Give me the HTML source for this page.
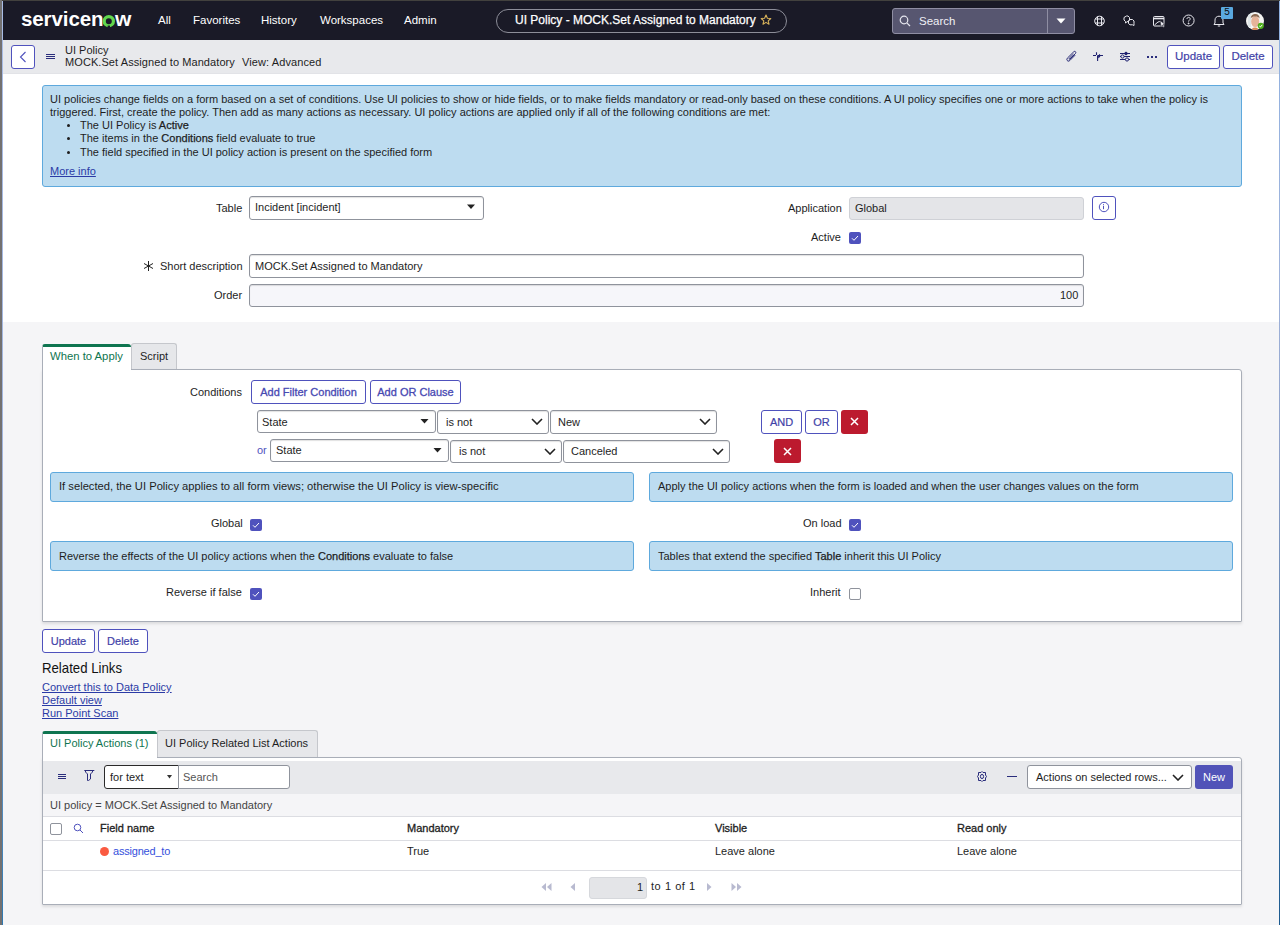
<!DOCTYPE html>
<html><head><meta charset="utf-8">
<style>
*{box-sizing:border-box;margin:0;padding:0}
html,body{width:1280px;height:925px;overflow:hidden;-webkit-font-smoothing:antialiased}
body{position:relative;background:#f5f5f7;font-family:"Liberation Sans",sans-serif;font-size:11px;color:#1e1e1e}
.a{position:absolute}
.t{position:absolute;white-space:nowrap;line-height:13px}
.hdr{left:0;top:0;width:1280px;height:40px;background:#1a1a27}
.sub{left:0;top:40px;width:1280px;height:34px;background:#e8e9ec;border-bottom:1px solid #e2e3e7}
.form{left:0;top:74px;width:1280px;height:248px;background:#fff}
.btn{position:absolute;border:1px solid #4f52bd;border-radius:3px;background:#fff;color:#3f42a8;font-size:11px;text-align:center;-webkit-text-stroke:0.2px #3f42a8}
.inp{position:absolute;border:1px solid #8f939c;border-radius:3px;background:#fff;box-shadow:inset 0 1px 1px rgba(0,0,0,.12)}
.info{position:absolute;background:#bddcf0;border:1px solid #5ea9dd;border-radius:3px}
.cb{position:absolute;width:12px;height:12px;background:#4f52bd;border-radius:2px}
.cb svg{position:absolute;left:0;top:0}
.sb{-webkit-text-stroke:0.25px #1e1e1e}
.lnk{color:#2b3ba6;text-decoration:underline}
</style></head><body>
<!-- header -->
<div class="a hdr"></div>
<div class="a sub"></div>
<div class="a form"></div>


<!-- logo -->
<div class="t" style="left:21px;top:7px;font-size:20.5px;line-height:24px;font-weight:bold;color:#fff;letter-spacing:-0.1px">servicen</div>
<svg class="a" style="left:102px;top:14.5px" width="14" height="13" viewBox="0 0 14 13"><circle cx="6.8" cy="6.2" r="4.6" fill="none" stroke="#62d84e" stroke-width="3.2"/><rect x="5.6" y="10.6" width="2.4" height="2.4" fill="#1a1a27"/></svg>
<div class="t" style="left:115px;top:7px;font-size:21px;line-height:24px;font-weight:bold;color:#fff">w</div>
<div class="t" style="left:158px;top:14px;font-size:11.5px;color:#fff">All</div>
<div class="t" style="left:193px;top:14px;font-size:11.5px;color:#fff">Favorites</div>
<div class="t" style="left:261px;top:14px;font-size:11.5px;color:#fff">History</div>
<div class="t" style="left:320px;top:14px;font-size:11.5px;color:#fff">Workspaces</div>
<div class="t" style="left:404px;top:14px;font-size:11.5px;color:#fff">Admin</div>
<!-- pill -->
<div class="a" style="left:496px;top:9px;width:291px;height:24px;border:1px solid #8d8e99;border-radius:12px"></div>
<div class="t" style="left:515px;top:14px;font-size:12px;color:#fff;font-weight:normal;-webkit-text-stroke:0.25px #fff">UI Policy - MOCK.Set Assigned to Mandatory</div>
<svg class="a" style="left:760px;top:14px" width="12" height="12" viewBox="0 0 12 12"><path d="M6 1 L7.4 4.2 L10.8 4.5 L8.2 6.8 L9 10.2 L6 8.4 L3 10.2 L3.8 6.8 L1.2 4.5 L4.6 4.2 Z" fill="none" stroke="#d8b25a" stroke-width="1.1" stroke-linejoin="round"/></svg>
<!-- search -->
<div class="a" style="left:892px;top:8px;width:183px;height:26px;background:#575670;border:1px solid #8f8ea3;border-radius:3px"></div>
<div class="a" style="left:1047px;top:9px;width:1px;height:24px;background:#8f8ea3"></div>
<svg class="a" style="left:899px;top:15px" width="12" height="12" viewBox="0 0 12 12"><circle cx="5" cy="5" r="3.8" fill="none" stroke="#e6e6ee" stroke-width="1.2"/><path d="M7.8 7.8 L11 11" stroke="#e6e6ee" stroke-width="1.2"/></svg>
<div class="t" style="left:919px;top:15px;font-size:11.5px;color:#f0f0f5">Search</div>
<svg class="a" style="left:1056px;top:18px" width="10" height="6" viewBox="0 0 10 6"><path d="M0.5 0.5 L9.5 0.5 L5 5.5 Z" fill="#fff"/></svg>
<!-- right icons -->
<svg class="a" style="left:1094px;top:15px" width="12" height="12" viewBox="0 0 12 12" fill="none" stroke="#e8e8ee" stroke-width="1"><circle cx="5.5" cy="6" r="4.8"/><path d="M3.5 1.5 V10.5 M7.5 1.5 V10.5 M1 4 H10 M1 8 H10"/></svg>
<svg class="a" style="left:1123px;top:15px" width="13" height="12" viewBox="0 0 13 12" fill="none" stroke="#e8e8ee" stroke-width="1"><path d="M3.5 1 H5 L6.5 2.5 V5 L5 6.5 L4 6.8 L2.5 8 V6.5 L1 5 V2.5 Z"/><path d="M7 4.5 H9.5 L11 6 V8.5 L11 10.5 L9.5 9.8 H7 L5.5 8.5 V6 Z"/></svg>
<svg class="a" style="left:1153px;top:16px" width="13" height="12" viewBox="0 0 13 12" fill="none" stroke="#e8e8ee" stroke-width="1"><rect x="0.5" y="0.5" width="10.5" height="9.5" rx="1"/><path d="M0.5 2.5 H11" stroke-width="1.6"/><path d="M1.5 9 L5 6 L7 5.5"/><path d="M7 4.5 L12 8.3 L10.2 8.6 L11.6 10.8 L10.6 11.4 L9.3 9.2 L8 10.5 Z" fill="#e8e8ee" stroke="#1a1a27" stroke-width="0.5"/></svg>
<svg class="a" style="left:1182px;top:14px" width="14" height="14" viewBox="0 0 14 14" fill="none" stroke="#e8e8ee" stroke-width="1"><circle cx="6.6" cy="6.5" r="5.5"/><path d="M5 5 C5 3.9 5.7 3.4 6.6 3.4 C7.5 3.4 8.2 4 8.2 4.9 C8.2 6 6.6 6.2 6.6 7.6"/><circle cx="6.6" cy="9.4" r="0.5" fill="#e8e8ee"/></svg>
<svg class="a" style="left:1212px;top:14px" width="14" height="14" viewBox="0 0 14 14" fill="none" stroke="#e8e8ee" stroke-width="1"><path d="M2 10.5 H12 L11 9 V6 C11 3.8 9.3 2.2 7 2.2 C4.7 2.2 3 3.8 3 6 V9 Z"/><path d="M5.8 12 H8.2"/></svg>
<div class="a" style="left:1221px;top:7px;width:12px;height:12px;background:#5aa9e0;border-radius:1px"></div>
<div class="t" style="left:1224px;top:7px;font-size:10px;color:#111;line-height:12px;font-family:'Liberation Mono'">5</div>
<!-- avatar -->
<div class="a" style="left:1246px;top:12px;width:18px;height:18px;border-radius:50%;overflow:hidden;background:#f4f4f2">
<svg class="a" style="left:-1px;top:-1px" width="20" height="20" viewBox="0 0 20 20">
<rect x="3" y="2" width="3" height="14" fill="#dfe6e8"/>
<ellipse cx="10.2" cy="10.5" rx="4" ry="5.6" fill="#e6b49a"/>
<path d="M5.8 7.5 C6 4 8 3 10.5 3 C13 3 14.6 4.5 14.6 7.5 C13.5 6 12 5.5 10 5.6 C8 5.6 6.8 6.2 5.8 7.5 Z" fill="#8c6a52"/>
<ellipse cx="10" cy="18.5" rx="3" ry="2" fill="#d9864e"/>
</svg></div>
<svg class="a" style="left:1245px;top:11px" width="20" height="20" viewBox="0 0 20 20">
<circle cx="15.8" cy="14.8" r="3.1" fill="#4caf1a"/>
<path d="M14.3 15 L15.4 16 L17.3 13.8" fill="none" stroke="#fff" stroke-width="1"/>
</svg>
<!-- subheader -->
<div class="btn" style="left:11px;top:45px;width:24px;height:24px"></div>
<svg class="a" style="left:19px;top:51px" width="8" height="12" viewBox="0 0 8 12"><path d="M6.5 1 L1.5 6 L6.5 11" fill="none" stroke="#4f52bd" stroke-width="1.1"/></svg>
<svg class="a" style="left:46px;top:54px" width="9" height="5" viewBox="0 0 9 5"><rect x="0" y="0" width="9" height="1" fill="#2a2d7c"/><rect x="0" y="2" width="9" height="1" fill="#2a2d7c"/><rect x="0" y="4" width="9" height="1" fill="#2a2d7c"/></svg>
<div class="t" style="left:65px;top:44px;font-size:11px;color:#1e1e1e">UI Policy</div>
<div class="t" style="left:65px;top:56px;font-size:11px;color:#1e1e1e;letter-spacing:0.08px">MOCK.Set Assigned to Mandatory</div>
<div class="t" style="left:242px;top:56px;font-size:11px;color:#1e1e1e;letter-spacing:0.1px">View: Advanced</div>
<svg class="a" style="left:1065px;top:50px" width="13" height="13" viewBox="0 0 13 13"><path d="M8.5 4 L4.2 8.3 C3.6 8.9 4.3 9.7 4.9 9.1 L10.4 3.6 C11.4 2.6 10.6 0.9 9.3 1.4 C9 1.5 8.8 1.7 8.5 2 L2.3 8.2 C1.1 9.4 2.4 11.7 4 11.1 C4.3 11 4.5 10.8 4.8 10.5 L10.2 5.1" fill="none" stroke="#1f2170" stroke-width="0.95"/></svg>
<svg class="a" style="left:1092px;top:51px" width="12" height="11" viewBox="0 0 12 11"><path d="M1 4.5 H4 M4.5 1.2 V4 M5.6 4.5 V10 M5.5 4.5 H11 M7.5 3.3 V4.5 M6.5 6.5 L8 5" fill="none" stroke="#1f2170" stroke-width="1.1"/><path d="M5.2 5 H7 L6 7.5 H5.2 Z" fill="#1f2170"/></svg>
<svg class="a" style="left:1119px;top:51px" width="12" height="11" viewBox="0 0 12 11" fill="none" stroke="#1f2170" stroke-width="1"><path d="M1 2.5 H11 M1 5.5 H11 M1 8.5 H11"/><circle cx="7" cy="2.5" r="1.3" fill="#1f2170"/><circle cx="3.5" cy="5.5" r="1.6" fill="#e8e9ec"/><circle cx="8" cy="8.5" r="1.6" fill="#e8e9ec"/></svg>
<svg class="a" style="left:1147px;top:56px" width="10" height="2" viewBox="0 0 10 2"><rect x="0" y="0" width="2" height="2" fill="#2a2d7c"/><rect x="4" y="0" width="2" height="2" fill="#2a2d7c"/><rect x="8" y="0" width="2" height="2" fill="#2a2d7c"/></svg>
<div class="btn" style="left:1167px;top:45px;width:53px;height:24px;line-height:20px;font-size:11.5px">Update</div>
<div class="btn" style="left:1223px;top:45px;width:50px;height:24px;line-height:20px;font-size:11.5px">Delete</div>


<!-- info box top -->
<div class="info" style="left:42px;top:85px;width:1200px;height:102px"></div>
<div class="t" style="left:50px;top:93px">UI policies change fields on a form based on a set of conditions. Use UI policies to show or hide fields, or to make fields mandatory or read-only based on these conditions. A UI policy specifies one or more actions to take when the policy is</div>
<div class="t" style="left:50px;top:106px">triggered. First, create the policy. Then add as many actions as necessary. UI policy actions are applied only if all of the following conditions are met:</div>
<div class="a" style="left:67px;top:124px;width:3px;height:3px;border-radius:50%;background:#1e1e1e"></div>
<div class="a" style="left:67px;top:137px;width:3px;height:3px;border-radius:50%;background:#1e1e1e"></div>
<div class="a" style="left:67px;top:151px;width:3px;height:3px;border-radius:50%;background:#1e1e1e"></div>
<div class="t" style="left:80px;top:119px">The UI Policy is <span class="sb">Active</span></div>
<div class="t" style="left:80px;top:132px">The items in the <span class="sb">Conditions</span> field evaluate to true</div>
<div class="t" style="left:80px;top:146px">The field specified in the UI policy action is present on the specified form</div>
<div class="t lnk" style="left:50px;top:165px">More info</div>

<!-- fields -->
<div class="t" style="left:216px;top:202px">Table</div>
<div class="inp" style="left:249px;top:196px;width:235px;height:24px"></div>
<div class="t" style="left:255px;top:201px">Incident [incident]</div>
<svg class="a" style="left:466px;top:204px" width="10" height="6" viewBox="0 0 10 6"><path d="M1 0.5 H9 L5 5 Z" fill="#222"/></svg>

<div class="t" style="left:788px;top:202px">Application</div>
<div class="a" style="left:849px;top:197px;width:235px;height:23px;background:#e4e5e8;border:1px solid #cfd1d6;border-radius:3px"></div>
<div class="t" style="left:855px;top:202px">Global</div>
<div class="btn" style="left:1092px;top:196px;width:24px;height:24px"></div>
<svg class="a" style="left:1098px;top:201px" width="12" height="12" viewBox="0 0 12 12" fill="none" stroke="#4f52bd" stroke-width="1"><circle cx="6" cy="6" r="4.7"/><path d="M5.5 4.8 V8.2"/><rect x="5" y="3.2" width="1" height="0.9" fill="#4f52bd" stroke="none"/></svg>

<div class="t" style="left:811px;top:231px">Active</div>
<div class="cb" style="left:849px;top:232px;width:12px;height:12px"><svg width="12" height="12" viewBox="0 0 12 12"><path d="M3 6.3 L5 8.3 L9 4" fill="none" stroke="#fff" stroke-width="1"/></svg></div>

<svg class="a" style="left:143px;top:261px" width="11" height="10" viewBox="0 0 11 10" fill="none" stroke="#222" stroke-width="1"><path d="M5.5 0 V10 M1 2.5 L10 7.5 M1 7.5 L10 2.5"/></svg>
<div class="t" style="left:160px;top:260px">Short description</div>
<div class="inp" style="left:249px;top:254px;width:835px;height:24px"></div>
<div class="t" style="left:255px;top:260px">MOCK.Set Assigned to Mandatory</div>

<div class="t" style="left:214px;top:289px">Order</div>
<div class="inp" style="left:249px;top:284px;width:835px;height:23px;background:#f6f6fa"></div>
<div class="t" style="left:1060px;top:289px">100</div>

<!-- tabs -->
<div class="a" style="left:131px;top:343px;width:46px;height:27px;background:#e6e7ea;border:1px solid #c5c7cc;border-bottom:none;border-radius:3px 3px 0 0"></div>
<div class="t" style="left:140px;top:350px">Script</div>
<div class="a" style="left:42px;top:369px;width:1200px;height:253px;background:#fff;border:1px solid #a9aeb8;border-radius:0 3px 1px 1px;box-shadow:0 2px 3px rgba(0,0,0,.1)"></div>
<div class="a" style="left:42px;top:344px;width:89px;height:27px;background:#fff;border-left:1px solid #a9aeb8;border-radius:3px 3px 0 0;border-top:3px solid #0f7550"></div>
<div class="t" style="left:50px;top:350px;color:#0f7550;font-size:11.3px">When to Apply</div>

<div class="t" style="left:190px;top:386px">Conditions</div>
<div class="btn" style="left:251px;top:380px;width:115px;height:24px;line-height:22px;font-size:11px;-webkit-text-stroke:0.3px #4f52bd">Add Filter Condition</div>
<div class="btn" style="left:370px;top:380px;width:91px;height:24px;line-height:22px;font-size:11px;-webkit-text-stroke:0.3px #4f52bd">Add OR Clause</div>

<div class="inp" style="left:257px;top:410px;width:179px;height:23px"></div>
<div class="t" style="left:262px;top:416px">State</div>
<svg class="a" style="left:420px;top:419px" width="9" height="5" viewBox="0 0 9 5"><path d="M0.5 0 H8.5 L4.5 4.5 Z" fill="#222"/></svg>
<div class="inp" style="left:437px;top:410px;width:112px;height:24px"></div>
<div class="t" style="left:446px;top:416px">is not</div>
<svg class="a" style="left:531px;top:418px" width="12" height="7" viewBox="0 0 12 7"><path d="M1 1 L6 6 L11 1" fill="none" stroke="#222" stroke-width="1.6"/></svg>
<div class="inp" style="left:550px;top:410px;width:167px;height:24px"></div>
<div class="t" style="left:558px;top:416px">New</div>
<svg class="a" style="left:699px;top:418px" width="12" height="7" viewBox="0 0 12 7"><path d="M1 1 L6 6 L11 1" fill="none" stroke="#222" stroke-width="1.6"/></svg>
<div class="btn" style="left:761px;top:410px;width:41px;height:24px;line-height:22px">AND</div>
<div class="btn" style="left:805px;top:410px;width:33px;height:24px;line-height:22px">OR</div>
<div class="a" style="left:841px;top:410px;width:27px;height:24px;background:#bc1a2e;border-radius:3px"></div>
<svg class="a" style="left:850px;top:417px" width="9" height="9" viewBox="0 0 9 9"><path d="M1 1 L8 8 M8 1 L1 8" stroke="#fff" stroke-width="1.5"/></svg>

<div class="t" style="left:257px;top:444px;color:#4f52bd">or</div>
<div class="inp" style="left:270px;top:439px;width:179px;height:23px"></div>
<div class="t" style="left:276px;top:444px">State</div>
<svg class="a" style="left:433px;top:448px" width="9" height="5" viewBox="0 0 9 5"><path d="M0.5 0 H8.5 L4.5 4.5 Z" fill="#222"/></svg>
<div class="inp" style="left:450px;top:440px;width:112px;height:23px"></div>
<div class="t" style="left:459px;top:445px">is not</div>
<svg class="a" style="left:544px;top:448px" width="12" height="7" viewBox="0 0 12 7"><path d="M1 1 L6 6 L11 1" fill="none" stroke="#222" stroke-width="1.6"/></svg>
<div class="inp" style="left:563px;top:440px;width:167px;height:23px"></div>
<div class="t" style="left:571px;top:445px">Canceled</div>
<svg class="a" style="left:712px;top:448px" width="12" height="7" viewBox="0 0 12 7"><path d="M1 1 L6 6 L11 1" fill="none" stroke="#222" stroke-width="1.6"/></svg>
<div class="a" style="left:774px;top:439px;width:27px;height:24px;background:#bc1a2e;border-radius:3px"></div>
<svg class="a" style="left:783px;top:447px" width="9" height="9" viewBox="0 0 9 9"><path d="M1 1 L8 8 M8 1 L1 8" stroke="#fff" stroke-width="1.5"/></svg>

<div class="info" style="left:50px;top:472px;width:584px;height:30px"></div>
<div class="t" style="left:59px;top:480px;font-size:11.2px">If selected, the UI Policy applies to all form views; otherwise the UI Policy is view-specific</div>
<div class="info" style="left:649px;top:472px;width:584px;height:30px"></div>
<div class="t" style="left:658px;top:480px">Apply the UI policy actions when the form is loaded and when the user changes values on the form</div>
<div class="t" style="left:211px;top:517px">Global</div>
<div class="cb" style="left:250px;top:519px;width:12px;height:12px"><svg width="12" height="12" viewBox="0 0 12 12"><path d="M3 6.3 L5 8.3 L9 4" fill="none" stroke="#fff" stroke-width="1"/></svg></div>
<div class="t" style="left:803px;top:517px">On load</div>
<div class="cb" style="left:849px;top:519px;width:12px;height:12px"><svg width="12" height="12" viewBox="0 0 12 12"><path d="M3 6.3 L5 8.3 L9 4" fill="none" stroke="#fff" stroke-width="1"/></svg></div>

<div class="info" style="left:50px;top:541px;width:584px;height:30px"></div>
<div class="t" style="left:59px;top:550px">Reverse the effects of the UI policy actions when the <span class="sb">Conditions</span> evaluate to false</div>
<div class="info" style="left:649px;top:541px;width:584px;height:30px"></div>
<div class="t" style="left:658px;top:550px">Tables that extend the specified <span class="sb">Table</span> inherit this UI Policy</div>
<div class="t" style="left:166px;top:586px">Reverse if false</div>
<div class="cb" style="left:250px;top:588px;width:12px;height:12px"><svg width="12" height="12" viewBox="0 0 12 12"><path d="M3 6.3 L5 8.3 L9 4" fill="none" stroke="#fff" stroke-width="1"/></svg></div>
<div class="t" style="left:810px;top:586px">Inherit</div>
<div class="a" style="left:849px;top:588px;width:12px;height:12px;border:1px solid #8f939c;border-radius:2px;background:#fff"></div>

<!-- buttons / related links -->
<div class="btn" style="left:42px;top:629px;width:53px;height:24px;line-height:22px">Update</div>
<div class="btn" style="left:98px;top:629px;width:50px;height:24px;line-height:22px">Delete</div>
<div class="t" style="left:42px;top:659px;font-size:15px;line-height:17px;transform:scaleX(0.88);transform-origin:0 0;color:#111">Related Links</div>
<div class="t lnk" style="left:42px;top:681px">Convert this to Data Policy</div>
<div class="t lnk" style="left:42px;top:694px">Default view</div>
<div class="t lnk" style="left:42px;top:707px">Run Point Scan</div>

<!-- related list tabs -->
<div class="a" style="left:157px;top:730px;width:161px;height:28px;background:#e6e7ea;border:1px solid #c5c7cc;border-bottom:none;border-radius:3px 3px 0 0"></div>
<div class="t" style="left:165px;top:737px">UI Policy Related List Actions</div>
<div class="a" style="left:42px;top:757px;width:1200px;height:148px;background:#fff;border:1px solid #a9aeb8;border-radius:0 3px 1px 1px;box-shadow:0 2px 3px rgba(0,0,0,.1)"></div>
<div class="a" style="left:42px;top:731px;width:115px;height:27px;background:#fff;border-left:1px solid #a9aeb8;border-radius:3px 3px 0 0;border-top:3px solid #0f7550"></div>
<div class="t" style="left:50px;top:737px;color:#0f7550">UI Policy Actions (1)</div>

<!-- list -->
<div class="a" style="left:43px;top:761px;width:1198px;height:33px;background:#e8e9ec"></div>
<svg class="a" style="left:58px;top:774px" width="8" height="5" viewBox="0 0 8 5"><rect x="0" y="0" width="8" height="1" fill="#2a2d7c"/><rect x="0" y="2" width="8" height="1" fill="#2a2d7c"/><rect x="0" y="4" width="8" height="1" fill="#2a2d7c"/></svg>
<svg class="a" style="left:84px;top:770px" width="11" height="11" viewBox="0 0 11 11"><path d="M0.3 0.5 H10.3 M1.5 0.5 V2 L3.5 4 V10.5 H4.5 L6.5 9 V4 L8.5 2 V0.5" fill="none" stroke="#2a2d7c" stroke-width="1"/></svg>
<div class="a" style="left:104px;top:765px;width:75px;height:24px;background:#fff;border:1px solid #2a2a2a;border-radius:3px 0 0 3px"></div>
<div class="t" style="left:110px;top:771px">for text</div>
<svg class="a" style="left:167px;top:775px" width="5" height="4" viewBox="0 0 5 4"><path d="M0 0 H5 L2.5 3.5 Z" fill="#333"/></svg>
<div class="a" style="left:178px;top:765px;width:112px;height:24px;background:#fff;border:1px solid #8f939c;border-radius:0 3px 3px 0"></div>
<div class="t" style="left:183px;top:771px;color:#555">Search</div>
<svg class="a" style="left:977px;top:771px" width="10" height="11" viewBox="0 0 10 11"><path d="M5 0.5 L6 1.5 H8.5 V4 L9.5 5.5 L8.5 7 V9.5 H6 L5 10.5 L4 9.5 H1.5 V7 L0.5 5.5 L1.5 4 V1.5 H4 Z" fill="none" stroke="#2a2d7c" stroke-width="1"/><ellipse cx="5" cy="5.5" rx="1.6" ry="2.1" fill="none" stroke="#2a2d7c" stroke-width="1"/></svg>
<div class="a" style="left:1007px;top:776px;width:10px;height:1px;background:#2a2d7c"></div>
<div class="a" style="left:1027px;top:765px;width:165px;height:24px;background:#fff;border:1px solid #8f939c;border-radius:3px"></div>
<div class="t" style="left:1036px;top:771px">Actions on selected rows...</div>
<svg class="a" style="left:1172px;top:774px" width="12" height="7" viewBox="0 0 12 7"><path d="M1 1 L6 6 L11 1" fill="none" stroke="#222" stroke-width="1.6"/></svg>
<div class="a" style="left:1195px;top:765px;width:38px;height:24px;background:#5153b8;border-radius:3px"></div>
<div class="t" style="left:1203px;top:771px;color:#fff">New</div>

<div class="a" style="left:43px;top:794px;width:1198px;height:22px;background:#f5f5f7"></div>
<div class="t" style="left:50px;top:799px;color:#444">UI policy = MOCK.Set Assigned to Mandatory</div>
<div class="a" style="left:43px;top:816px;width:1198px;height:1px;background:#dcdde2"></div>
<div class="a" style="left:50px;top:823px;width:12px;height:12px;border:1px solid #8f939c;border-radius:2px;background:#fff"></div>
<svg class="a" style="left:73px;top:823px" width="11" height="11" viewBox="0 0 11 11" fill="none" stroke="#4f52bd" stroke-width="1"><circle cx="4.5" cy="4.5" r="3.3"/><path d="M7 7 L10 10"/></svg>
<div class="t" style="left:100px;top:822px;-webkit-text-stroke:0.3px #1e1e1e">Field name</div>
<div class="t" style="left:407px;top:822px;-webkit-text-stroke:0.3px #1e1e1e">Mandatory</div>
<div class="t" style="left:715px;top:822px;-webkit-text-stroke:0.3px #1e1e1e">Visible</div>
<div class="t" style="left:957px;top:822px;-webkit-text-stroke:0.3px #1e1e1e">Read only</div>
<div class="a" style="left:43px;top:840px;width:1198px;height:1px;background:#dcdde2"></div>
<div class="a" style="left:100px;top:847px;width:9px;height:9px;border-radius:50%;background:#fa5a41"></div>
<div class="t" style="left:113px;top:845px;color:#3550dc;letter-spacing:-0.2px">assigned_to</div>
<div class="t" style="left:407px;top:845px">True</div>
<div class="t" style="left:715px;top:845px">Leave alone</div>
<div class="t" style="left:957px;top:845px">Leave alone</div>
<div class="a" style="left:43px;top:870px;width:1198px;height:1px;background:#dcdde2"></div>
<svg class="a" style="left:541px;top:883px" width="11" height="8" viewBox="0 0 11 8"><path d="M5 0 L0.5 4 L5 8 Z M10.5 0 L6 4 L10.5 8 Z" fill="#b8bad0"/></svg>
<svg class="a" style="left:570px;top:883px" width="5" height="8" viewBox="0 0 5 8"><path d="M5 0 L0.5 4 L5 8 Z" fill="#b8bad0"/></svg>
<div class="a" style="left:589px;top:877px;width:58px;height:22px;background:#e4e5e8;border:1px solid #d6d8dc;border-radius:3px"></div>
<div class="t" style="left:637px;top:881px">1</div>
<div class="t" style="left:651px;top:880px;letter-spacing:0.55px">to 1 of 1</div>
<svg class="a" style="left:707px;top:883px" width="5" height="8" viewBox="0 0 5 8"><path d="M0 0 L4.5 4 L0 8 Z" fill="#b8bad0"/></svg>
<svg class="a" style="left:731px;top:883px" width="11" height="8" viewBox="0 0 11 8"><path d="M0.5 0 L5 4 L0.5 8 Z M6 0 L10.5 4 L6 8 Z" fill="#b8bad0"/></svg>

<!-- borders -->
<div class="a" style="left:0;top:0;width:1280px;height:1px;background:#42413e"></div>
<div class="a" style="left:0;top:0;width:2px;height:925px;background:#737171"></div>
<div class="a" style="left:2px;top:1px;width:1px;height:924px;background:linear-gradient(#a9bde6,#9fb3dc 60%,#2f78b0)"></div>
<div class="a" style="left:1279px;top:1px;width:1px;height:924px;background:linear-gradient(#8eb0e0,#a0b4dc 30%,#8ea0c8 50%,#1a5a90)"></div>
</body></html>
